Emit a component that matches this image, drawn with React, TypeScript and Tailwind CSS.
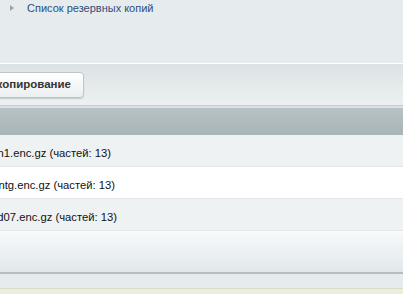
import React from 'react';

const rows = [
  { name: 'backup_20231012_an1.enc.gz', end: 'w-[111px]', tone: 'bg-[#eef2f3]' },
  { name: 'backup_20231013_ntg.enc.gz', end: 'w-[115px]', tone: 'bg-white' },
  { name: 'backup_20231014_d07.enc.gz', end: 'w-[117px]', tone: 'bg-[#eef2f3]' },
];

export default function App() {
  return (
    <div
      className="flex h-[294px] w-[403px] flex-col overflow-hidden bg-[#e6ebed] text-[#111]"
      style={{ fontFamily: '"Liberation Sans", Arial, sans-serif' }}
    >
      {/* breadcrumb */}
      <div className="flex h-[63px] items-start gap-[13px] pl-[10px] pt-[1px]">
        <span className="mt-[4px] h-0 w-0 border-y-[3px] border-l-[4px] border-y-transparent border-l-[#9aa3a8]" />
        <a className="text-[11px] leading-[14px] text-[#2d4d7c]">Список резервных копий</a>
      </div>

      {/* panel */}
      <div className="border-t border-white">
        <div className="flex h-[41px] items-center bg-gradient-to-b from-[#dde3e5] to-[#ecf0f1]">
          <div className="flex w-[84px] shrink-0 justify-end">
            <div className="flex h-[26px] shrink-0 items-center rounded-[4px] border border-[#bfc6ca] bg-gradient-to-b from-white to-[#eceff0] pl-[12px] pr-[12px] shadow-[0_1px_1px_rgba(0,0,0,0.15)]">
              <span className="whitespace-nowrap text-[11.5px] font-bold text-[#333]">Резервное копирование</span>
            </div>
          </div>
        </div>
        <div className="h-[3px] border-t border-[#c6cbd3] bg-[#dcdfe5]" />
        <div className="h-[27px] bg-gradient-to-b from-[#b7c2c5] to-[#a9b4b6]" />

        {rows.map((r) => (
          <div key={r.name} className={`flex h-[32px] items-start border-b border-[#e2e7e9] pt-[12px] ${r.tone}`}>
            <div className={`flex shrink-0 justify-end ${r.end}`}>
              <span className="whitespace-nowrap text-[11.25px] leading-[13px]">{r.name} (частей: 13)</span>
            </div>
          </div>
        ))}

        <div className="h-[43px] border-b-2 border-[#b6bcbf] bg-gradient-to-b from-[#f8f9fa] to-[#e1e8eb]" />
      </div>

      <div className="h-[14px]" />
      <div className="flex-1 border-t border-[#d8dccb] bg-[#eceedb]" />
    </div>
  );
}
